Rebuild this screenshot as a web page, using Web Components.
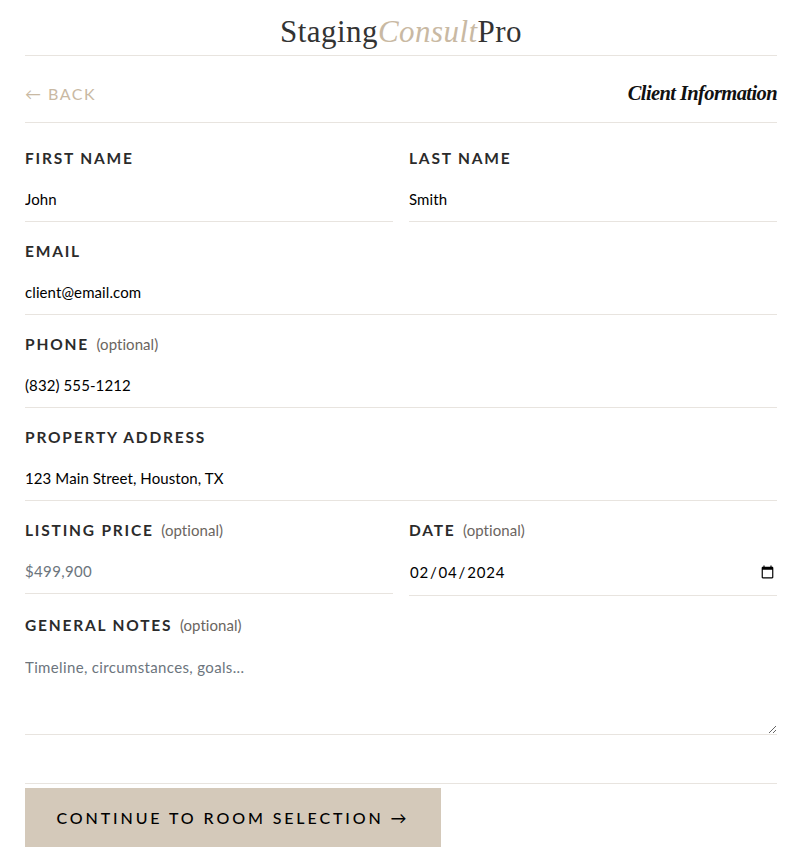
<!DOCTYPE html>
<html lang="en">
<head>
<meta charset="utf-8">
<title>StagingConsultPro</title>
<style>
  html, body { margin: 0; background: #fff; }
  body { font-family: 'Lato', 'Liberation Sans', sans-serif; color: #000; }
</style>
</head>
<body>
<consult-page>
  <consult-logo></consult-logo>
  <consult-nav heading="Client Information"></consult-nav>
  <form-row>
    <form-field label="First Name" value="John"></form-field>
    <form-field label="Last Name" value="Smith"></form-field>
  </form-row>
  <form-field label="Email" value="client@email.com"></form-field>
  <form-field label="Phone" optional value="(832) 555-1212"></form-field>
  <form-field label="Property Address" value="123 Main Street, Houston, TX"></form-field>
  <form-row>
    <form-field label="Listing Price" optional placeholder="$499,900"></form-field>
    <form-field label="Date" optional type="date" value="2024-02-04"></form-field>
  </form-row>
  <form-field label="General Notes" optional multiline placeholder="Timeline, circumstances, goals..."></form-field>
  <continue-bar>Continue to Room Selection →</continue-bar>
</consult-page>

<script>
class ConsultPage extends HTMLElement {
    constructor() {
        super();
        this.attachShadow({mode: 'open'});
        this.shadowRoot.innerHTML = `
            <style>
                :host { display: block; padding: 0 17px 16px 25px; }
            </style>
            <slot></slot>
        `;
    }
}

class ConsultLogo extends HTMLElement {
    constructor() {
        super();
        this.attachShadow({mode: 'open'});
        this.shadowRoot.innerHTML = `
            <style>
                :host {
                    display: block;
                    height: 55px;
                    border-bottom: 1px solid #e8e4df;
                    text-align: center;
                    font-family: 'Liberation Serif', serif;
                    font-size: 31px;
                    line-height: 64px;
                    letter-spacing: 0.45px;
                    color: #333;
                }
                em { color: #c9b9a3; }
            </style>
            Staging<em>Consult</em>Pro
        `;
    }
}

class ConsultNav extends HTMLElement {
    constructor() {
        super();
        this.attachShadow({mode: 'open'});
        this.shadowRoot.innerHTML = `
            <style>
                :host {
                    display: flex;
                    box-sizing: content-box;
                    justify-content: space-between;
                    align-items: center;
                    height: 58px;
                    padding-top: 8px;
                    margin-bottom: 6px;
                    border-bottom: 1px solid #e8e4df;
                }
                a {
                    font-size: 16px;
                    font-weight: 400;
                    letter-spacing: 1.5px;
                    color: #c9b9a3;
                    text-transform: uppercase;
                }
                h2 {
                    margin: 0;
                    font-family: 'Liberation Serif', serif;
                    font-style: italic;
                    font-weight: 700;
                    font-size: 20.5px;
                    letter-spacing: -0.6px;
                    color: #111;
                }
            </style>
            <a>← Back</a>
            <h2>${this.getAttribute('heading')}</h2>
        `;
    }
}

class FormRow extends HTMLElement {
    constructor() {
        super();
        this.attachShadow({mode: 'open'});
        this.shadowRoot.innerHTML = `
            <style>
                :host {
                    display: grid;
                    grid-template-columns: 1fr 1fr;
                    column-gap: 16px;
                    align-items: start;
                }
            </style>
            <slot></slot>
        `;
    }
}

class FormField extends HTMLElement {
    constructor() {
        super();
        this.attachShadow({mode: 'open'});
        let label = this.getAttribute('label');
        let value = this.getAttribute('value') || '';
        let placeholder = this.getAttribute('placeholder') || '';
        let type = this.getAttribute('type') || 'text';
        let optional = this.hasAttribute('optional') ? '<span>(optional)</span>' : '';
        let control = this.hasAttribute('multiline')
            ? `<textarea placeholder="${placeholder}">${value}</textarea>`
            : `<input type="${type}" value="${value}" placeholder="${placeholder}">`;
        this.shadowRoot.innerHTML = `
            <style>
                :host { display: block; padding-top: 19px; }
                label {
                    display: block;
                    height: 20px;
                    line-height: 20px;
                    margin-bottom: 10px;
                    font-size: 15.5px;
                    font-weight: 700;
                    letter-spacing: 1.8px;
                    text-transform: uppercase;
                    color: #2b2b2b;
                    white-space: nowrap;
                }
                span {
                    margin-left: 2px;
                    font-size: 15px;
                    font-weight: 400;
                    letter-spacing: 0.05px;
                    text-transform: none;
                    color: #6b6560;
                }
                input, textarea {
                    display: block;
                    box-sizing: border-box;
                    width: 100%;
                    margin: 0;
                    padding: 11px 0 11px;
                    border: 0;
                    border-bottom: 1px solid #e8e4df;
                    border-radius: 0;
                    outline: none;
                    background: transparent;
                    font: 400 15px/21px 'Lato', sans-serif;
                    letter-spacing: 0.1px;
                    color: #000;
                }
                input::placeholder, textarea::placeholder {
                    color: #6c757d;
                    opacity: 1;
                    letter-spacing: 0.35px;
                }
                input[type=date] { height: 46px; letter-spacing: 0.8px; }
                textarea { height: 90px; padding-top: 12px; resize: vertical; }
            </style>
            <label>${label} ${optional}</label>
            ${control}
        `;
    }
}

class ContinueBar extends HTMLElement {
    constructor() {
        super();
        this.attachShadow({mode: 'open'});
        this.shadowRoot.innerHTML = `
            <style>
                :host {
                    display: block;
                    margin-top: 48px;
                    padding-top: 4px;
                    border-top: 1px solid #e8e4df;
                }
                button {
                    display: block;
                    width: 416px;
                    height: 59px;
                    padding: 0;
                    border: 0;
                    border-radius: 0;
                    background: #d4c9ba;
                    font: 500 16px 'Lato', sans-serif;
                    letter-spacing: 2.9px;
                    text-transform: uppercase;
                    color: #000;
                }
            </style>
            <button type="button"><slot></slot></button>
        `;
    }
}

window.customElements.define('consult-page', ConsultPage);
window.customElements.define('consult-logo', ConsultLogo);
window.customElements.define('consult-nav', ConsultNav);
window.customElements.define('form-row', FormRow);
window.customElements.define('form-field', FormField);
window.customElements.define('continue-bar', ContinueBar);
</script>
</body>
</html>
